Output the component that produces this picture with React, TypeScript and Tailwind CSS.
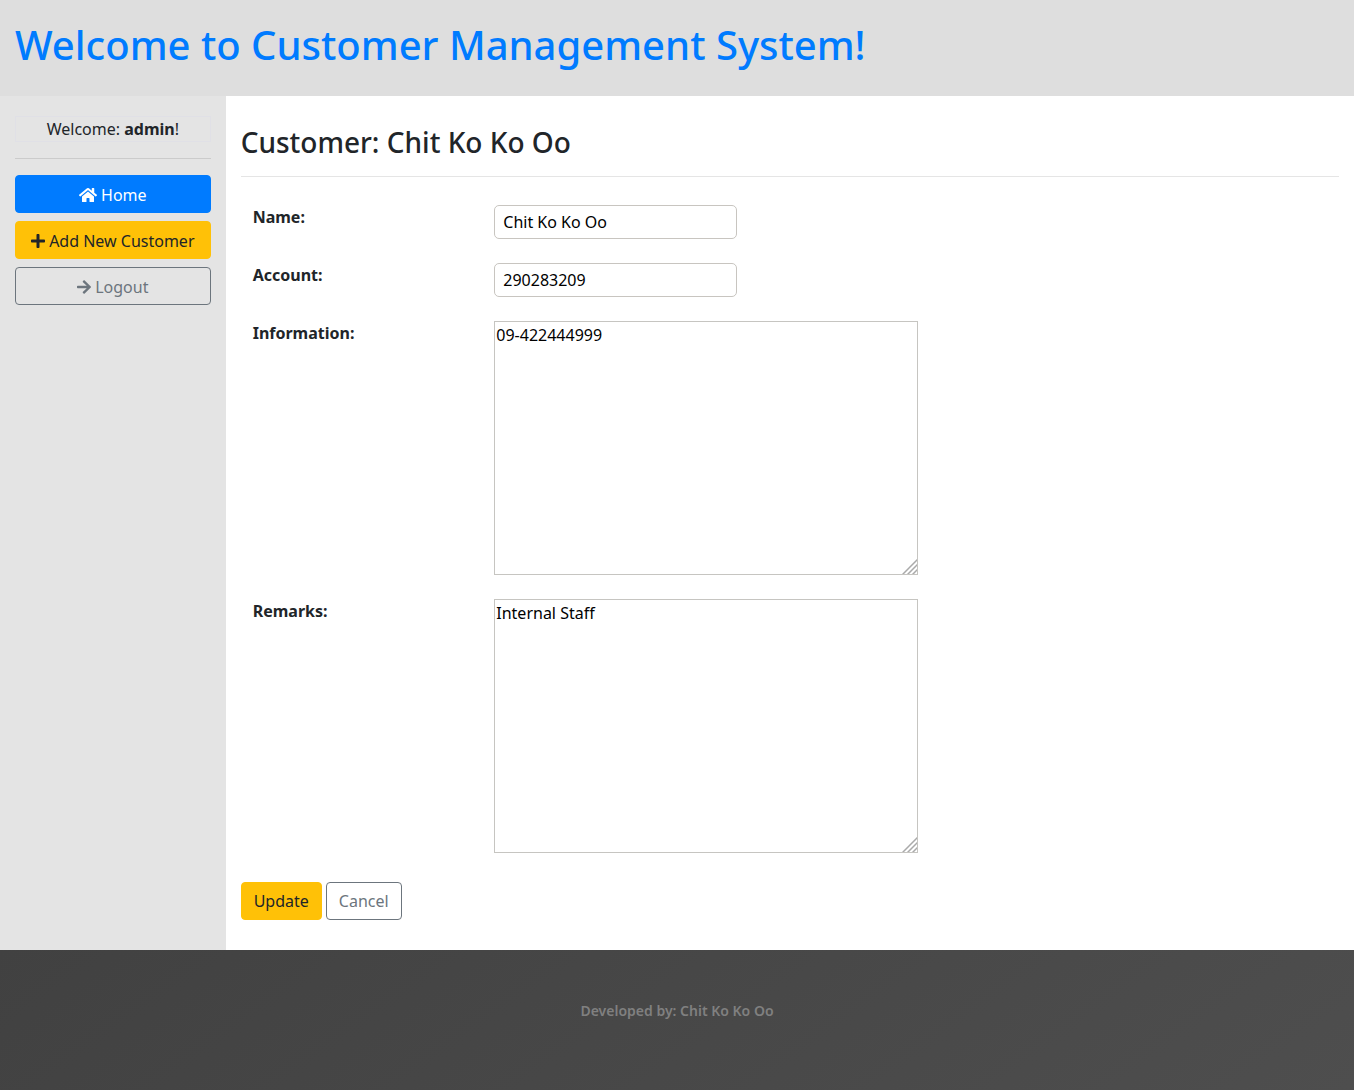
import type { ComponentProps } from "react";
import { FaArrowRight, FaHome, FaPlus } from "react-icons/fa";

const fieldRow = "grid grid-cols-[22%_1fr] items-start";
const labelText = "pl-3 font-bold";
const control = "px-3";
const textInput =
  "h-[34px] w-[243px] max-w-full rounded-[5px] border border-[#c8c5c0] bg-white px-2 text-black";
const button =
  "flex items-center justify-center gap-1 rounded border px-3 text-center";
const navButton = "pt-[7px] pb-[5px]";
const formButton = "py-[6px]";
const warning = "border-[#ffc107] bg-[#ffc107] text-[#212529]";
const outline = "border-[#6c757d] text-[#6c757d]";

function TextArea(props: ComponentProps<"textarea">) {
  return (
    <div className="relative w-fit max-w-full">
      <textarea
        {...props}
        className="block h-[254px] w-[424px] max-w-full resize border border-[#c6c5c1] bg-white px-px pt-px text-black"
      />
      <svg
        aria-hidden="true"
        viewBox="0 0 15 15"
        className="pointer-events-none absolute right-px bottom-px size-[15px] bg-white"
        fill="none"
        stroke="#aaaaaa"
        strokeWidth="1.5"
      >
        <path d="M0.5 15.5L15.5 0.5M5.5 15.5L15.5 5.5M10.5 15.5L15.5 10.5" />
      </svg>
    </div>
  );
}

function Sidebar() {
  return (
    <aside className="w-1/6 shrink-0 bg-[#e4e4e4] px-[15px] pt-5">
      <p className="border border-[#e0e0e6] pt-px leading-[23px] text-center">
        Welcome: <strong>admin</strong>!
      </p>
      <hr className="my-4 border-[#cbcbcb]" />
      <nav className="flex flex-col gap-2">
        <a href="#home" className={`${button} ${navButton} border-[#007bff] bg-[#007bff] text-white`}>
          <FaHome className="size-[18px]" />
          Home
        </a>
        <a href="#add" className={`${button} ${navButton} ${warning}`}>
          <FaPlus className="w-[14px]" />
          Add New Customer
        </a>
        <a href="#logout" className={`${button} ${navButton} ${outline}`}>
          <FaArrowRight className="w-[14px]" />
          Logout
        </a>
      </nav>
    </aside>
  );
}

function CustomerForm() {
  return (
    <form onSubmit={(event) => event.preventDefault()}>
      <div className="flex flex-col gap-6">
        <div className={fieldRow}>
          <label htmlFor="name" className={labelText}>Name:</label>
          <div className={control}>
            <input id="name" type="text" defaultValue="Chit Ko Ko Oo" className={`block ${textInput}`} />
          </div>
        </div>
        <div className={fieldRow}>
          <label htmlFor="account" className={labelText}>Account:</label>
          <div className={control}>
            <input id="account" type="text" defaultValue="290283209" className={`block ${textInput}`} />
          </div>
        </div>
        <div className={fieldRow}>
          <label htmlFor="information" className={labelText}>Information:</label>
          <div className={control}>
            <TextArea id="information" defaultValue="09-422444999" />
          </div>
        </div>
        <div className={fieldRow}>
          <label htmlFor="remarks" className={labelText}>Remarks:</label>
          <div className={control}>
            <TextArea id="remarks" defaultValue="Internal Staff" />
          </div>
        </div>
      </div>
      <div className="mt-[29px] flex gap-1">
        <button type="submit" className={`${button} ${formButton} ${warning}`}>Update</button>
        <button type="button" className={`${button} ${formButton} ${outline}`}>Cancel</button>
      </div>
    </form>
  );
}

export default function App() {
  return (
    <div className="flex min-h-screen flex-col bg-white font-['Noto_Sans',sans-serif] text-base text-[#212529]">
      <header className="bg-[#dedede] px-[15px] pt-[21px] pb-[27px]">
        <h1 className="text-[40px] leading-[48px] font-medium text-[#007bff]">
          Welcome to Customer Management System!
        </h1>
      </header>
      <div className="flex grow">
        <Sidebar />
        <main className="min-w-0 grow px-[15px] py-[30px]">
          <h2 className="text-[28px] leading-8 font-medium">Customer: Chit Ko Ko Oo</h2>
          <hr className="mt-[18px] mb-7 border-[#e5e5e5]" />
          <CustomerForm />
        </main>
      </div>
      <footer className="bg-linear-145 from-[#414141] to-[#4e4e4e] px-[15px] pt-[50px] pb-[69px] text-center text-[14px] leading-[21px] font-semibold text-[#808080]">
        Developed by: Chit Ko Ko Oo
      </footer>
    </div>
  );
}
